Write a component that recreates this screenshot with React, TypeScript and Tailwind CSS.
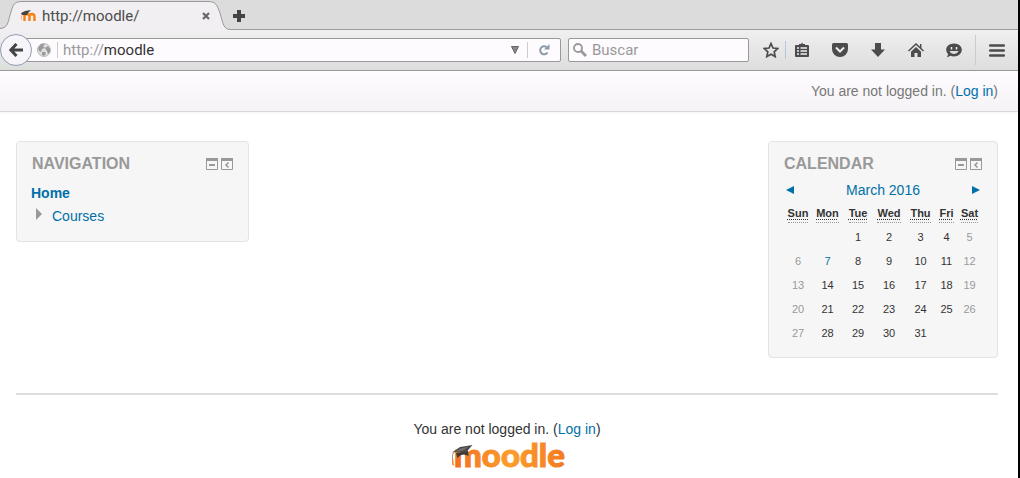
import type { ReactNode } from 'react';

const iconButton = 'flex h-7 w-[38px] items-center justify-center text-[#4c4c4c]';

function MoodleCap({ className }: { className: string }) {
  return (
    <svg viewBox="0 0 24 24" className={className} aria-hidden="true">
      <path d="M5 8 17 6 17.500 11C14 8.500 10 9 6.500 13Z" fill="#3a3a3a" />
      <path d="M1 7.500 9 2 21.500 0 15 7.500 8 6.800Z" fill="#4a4a4a" />
      <path d="M4 6.500 10 3.500 18 1.500 12 5.500Z" fill="#707070" />
      <path d="M3.500 7C1.500 8 1.500 10 1.500 14" fill="none" stroke="#777" strokeWidth="0.800" />
      <path d="M1 14h1.200l.8 7-2-1.500Z" fill="#f58a3c" />
    </svg>
  );
}

function TabStrip() {
  return (
    <div className="flex h-[30px] items-end border-b border-[#9c9c9c] bg-[#dcdcdc]">
      <div className="relative -mb-px h-[30px] w-[231px] shrink-0">
        <svg viewBox="0 0 231 30" className="absolute inset-0 h-full w-full" aria-hidden="true">
          <path
            d="M0 29C9 29 8 20 11 12C13 4 15 1.500 22 1.500H208C216 1.500 217 5 220 13C223 23 223 29.500 231 29.500V30H0Z"
            fill="#f1eff1"
          />
          <path
            d="M0 28.500C9 28 8 20 11 12C13 4 15 1.500 22 1.500H208C216 1.500 217 5 220 13C223 23 223 29.500 231 29.500"
            fill="none"
            stroke="#999"
          />
        </svg>
        <div className="relative flex h-full items-center pl-5 pr-[17px] pt-0.5 text-[15px] text-[#4c4c4c]">
          <span className="flex h-4 w-[22px] items-center" aria-hidden="true">
            <svg viewBox="0 0 18 16" className="h-4 w-[18px]">
              <path d="M4.500 13V7M4.500 9C4.500 5 9.500 5 9.500 9V13M9.500 9C9.500 5 14.500 5 14.500 9V13" fill="none" stroke="#f98012" strokeWidth="2.400" />
              <path d="M1 5 5 3 11 2 8 5 7 7 2 7Z" fill="#444" />
              <path d="M1.500 6V12" stroke="#f5a590" strokeWidth="0.800" />
            </svg>
          </span>
          <span className="grow">http://moodle/</span>
          <button type="button" aria-label="Close tab" className="flex h-4 w-4 items-center justify-center">
            <svg viewBox="0 0 8 8" className="h-2 w-2">
              <path d="m1 1 6 6M7 1 1 7" stroke="#666" strokeWidth="2.200" />
            </svg>
          </button>
        </div>
      </div>
      <button type="button" aria-label="New tab" className="flex h-[27px] w-4 items-center justify-center">
        <svg viewBox="0 0 12 12" className="h-3 w-3">
          <path d="M6 0v12M0 6h12" stroke="#444" strokeWidth="4" />
        </svg>
      </button>
    </div>
  );
}

function Toolbar() {
  return (
    <div className="flex h-[41px] items-center border-b border-[#999] bg-linear-to-b from-[#f1eff1] via-[#e7e6e7] to-[#dcdedc]">
      <button
        type="button"
        aria-label="Back"
        className="z-10 flex h-8 w-8 shrink-0 items-center justify-center rounded-full border border-[#939bb0] bg-[#f7f5f9]"
      >
        <svg viewBox="0 0 14 14" className="h-3.5 w-3.5">
          <path d="M7.500 1 1.800 7l5.700 6M2 7h12" fill="none" stroke="#444" strokeWidth="3" />
        </svg>
      </button>
      <div className="-ml-2 flex h-6 grow items-center rounded-r-xs border border-[#999] bg-[#fdfbfe] pl-3">
        <svg viewBox="0 0 14 14" className="h-3.5 w-3.5 shrink-0" aria-hidden="true">
          <circle cx="7" cy="7" r="6.500" fill="#dedede" stroke="#bbb" />
          <path d="M1 5 4 1 8 1 6 3 8 5 5 6 4 9 2 8ZM8 5 11 3 13 6 13 9 11 11 10 8ZM5 9 8 9 9 11 7 13 5 12Z" fill="#999" />
        </svg>
        <span className="ml-1.5 h-4 w-px bg-[#ccc]" />
        <div className="relative ml-[5px] h-5 grow text-[15px] leading-5">
          <input
            type="text"
            aria-label="Address"
            defaultValue="http://moodle"
            className="block h-5 w-full bg-transparent text-[#333] outline-none"
          />
          <span className="pointer-events-none absolute left-0 top-0 bg-[#fdfbfe] text-[#999]" aria-hidden="true">
            http://
          </span>
        </div>
        <button type="button" aria-label="Show history" className="flex h-5 w-6 items-center justify-center">
          <svg viewBox="0 0 8 8" className="h-2 w-2">
            <path d="M.5.500h7L4 7.500Z" fill="#888" stroke="#666" />
          </svg>
        </button>
        <span className="h-4 w-px bg-[#ccc]" />
        <button type="button" aria-label="Reload" className="flex h-5 w-8 items-center justify-center">
          <svg viewBox="0 0 12 12" className="h-3 w-3">
            <path d="M9.500 8.500A4 4 0 1 1 8.500 3" fill="none" stroke="#8a9aa8" strokeWidth="2" />
            <path d="M11.500 0v5.500H6Z" fill="#8a9aa8" />
          </svg>
        </button>
      </div>
      <label className="ml-[7px] flex h-6 w-[181px] shrink-0 items-center rounded-xs border border-[#999] bg-[#fdfbfe] pl-1 text-[15px]">
        <svg viewBox="0 0 14 14" className="h-3.5 w-3.5 shrink-0" aria-hidden="true">
          <circle cx="5" cy="5" r="4" fill="none" stroke="#999" strokeWidth="1.800" />
          <path d="m8 8 5 5" stroke="#999" strokeWidth="2.800" />
        </svg>
        <input
          type="search"
          aria-label="Buscar"
          placeholder="Buscar"
          className="ml-[5px] h-5 w-full bg-transparent outline-none placeholder:text-[#999]"
        />
      </label>
      <div className="ml-2 flex shrink-0 items-center">
        <button type="button" aria-label="Bookmark this page" className="flex h-7 w-7 items-center justify-center">
          <svg viewBox="0 0 16 16" className="h-4 w-4">
            <path d="m8 1.500 2 4.500 4.800.500-3.600 3.300 1 4.800L8 12.200l-4.200 2.400 1-4.800L1.200 6.500 6 6Z" fill="none" stroke="#4c4c4c" strokeWidth="1.700" />
          </svg>
        </button>
        <span className="h-[18px] w-px bg-[#b8c6dc]" />
        <button type="button" aria-label="Show bookmarks" className="flex h-7 w-8 items-center justify-center">
          <svg viewBox="0 0 16 16" className="h-4 w-4">
            <path d="M2 3h12q1 0 1 1v10q0 1-1 1H2q-1 0-1-1V4Q1 3 2 3Z" fill="#4c4c4c" />
            <path d="M5 4V2h2l1-1.500L9 2h2v2Z" fill="#4c4c4c" />
            <path d="M3 6h2M6.500 6h6.500M3 9h2M6.500 9h6.500M3 12h2M6.500 12h6.500" stroke="#eee" strokeWidth="1.600" />
          </svg>
        </button>
        <button type="button" aria-label="Pocket" className={`${iconButton} ml-[3px]`}>
          <svg viewBox="0 0 16 14" className="h-3.5 w-4">
            <path d="M1.500 0h13Q16 0 16 1.500V6a8 8 0 0 1-16 0V1.500Q0 0 1.500 0Z" fill="currentColor" />
            <path d="m4 4.500 4 4 4-4" fill="none" stroke="#eee" strokeWidth="2" />
          </svg>
        </button>
        <button type="button" aria-label="Downloads" className={iconButton}>
          <svg viewBox="0 0 14 14" className="h-3.5 w-3.5">
            <path d="M4 0h6v6.500h4L7 14 0 6.500h4Z" fill="currentColor" />
          </svg>
        </button>
        <button type="button" aria-label="Home page" className={iconButton}>
          <svg viewBox="0 0 16 15" className="h-[15px] w-4">
            <path d="M.5 8 8 1l7.500 7M12.700 1v4" fill="none" stroke="currentColor" strokeWidth="1.500" />
            <path d="M8 4 13 8.800V14H9.500v-4h-3v4H3V8.800Z" fill="currentColor" />
          </svg>
        </button>
        <button type="button" aria-label="Chat" className={iconButton}>
          <svg viewBox="0 0 16 15" className="h-[15px] w-4">
            <path d="M8 .500c4.400 0 7.800 2.800 7.800 6.300S12.400 13.500 8 13.500c-1.300 0-2.500-.2-3.500-.7L.8 14.500l1.400-3.200C1 10.100.2 8.600.2 6.800.2 3.300 3.600.500 8 .500Z" fill="currentColor" />
            <path d="M5.500 4v2.500M10.500 4v2.500" stroke="#eee" strokeWidth="1.500" />
            <path d="M3.500 8h9c-1.500 4-7.500 4-9 0Z" fill="#ddd" />
          </svg>
        </button>
        <span className="ml-[2px] h-[30px] w-px bg-[#ccc]" />
        <button type="button" aria-label="Open menu" className="flex h-7 w-[42px] items-center justify-center">
          <svg viewBox="0 0 16 13" className="h-[13px] w-4">
            <path d="M1.200 1.500h13.600M1.200 6.500h13.600M1.200 11.500h13.600" stroke="#4c4c4c" strokeWidth="2.600" strokeLinecap="round" />
          </svg>
        </button>
      </div>
    </div>
  );
}

function LoginInfo() {
  return (
    <>
      You are not logged in. (
      <a href="#login" className="text-[#0070a8]">
        Log in
      </a>
      )
    </>
  );
}

function Block({ title, className, children }: { title: string; className: string; children: ReactNode }) {
  return (
    <section className={`rounded border border-[#e3e3e3] bg-[#f6f6f6] px-[15px] pt-3 ${className}`}>
      <header className="flex h-5 items-center justify-between">
        <h2 className="text-base font-bold leading-5 text-[#999]">{title}</h2>
        <div className="flex gap-[3px]">
          <button type="button" aria-label={`Hide ${title} block`}>
            <svg viewBox="0 0 12 12" className="block h-3 w-3">
              <path d="M.5 1h11v10.500H.5Z" fill="none" stroke="#999" />
              <path d="M0 0h12v3H0ZM3 6h6v2H3Z" fill="#999" />
            </svg>
          </button>
          <button type="button" aria-label={`Dock ${title} block`}>
            <svg viewBox="0 0 12 12" className="block h-3 w-3">
              <path d="M.5 1h11v10.500H.5Z" fill="none" stroke="#999" />
              <path d="M0 0h12v3H0Z" fill="#999" />
              <path d="M7.500 4.500 5 7l2.500 2.500" fill="none" stroke="#999" strokeWidth="1.600" />
            </svg>
          </button>
        </div>
      </header>
      {children}
    </section>
  );
}

const days = [
  { short: 'Sun', full: 'Sunday', width: 'w-[28px]' },
  { short: 'Mon', full: 'Monday', width: 'w-[31px]' },
  { short: 'Tue', full: 'Tuesday', width: 'w-[30px]' },
  { short: 'Wed', full: 'Wednesday', width: 'w-[32px]' },
  { short: 'Thu', full: 'Thursday', width: 'w-[31px]' },
  { short: 'Fri', full: 'Friday', width: 'w-[21px]' },
  { short: 'Sat', full: 'Saturday', width: 'w-[25px]' },
];

const weeks = [
  [0, 0, 1, 2, 3, 4, 5],
  [6, 7, 8, 9, 10, 11, 12],
  [13, 14, 15, 16, 17, 18, 19],
  [20, 21, 22, 23, 24, 25, 26],
  [27, 28, 29, 30, 31, 0, 0],
];

function CalendarTable() {
  return (
    <table className="w-full table-fixed text-[11px] leading-4 text-[#333]">
      <thead>
        <tr className="h-[25px]">
          {days.map(({ short, full, width }) => (
            <th key={short} scope="col" className={`${width} p-0 font-bold`}>
              <abbr title={full} className="border-b border-dotted border-[#999] pb-[3px] underline decoration-dotted underline-offset-2">
                {short}
              </abbr>
            </th>
          ))}
        </tr>
      </thead>
      <tbody>
        {weeks.map((week, row) => (
          <tr key={row} className="h-6 text-center">
            {week.map((day, col) => (
              <td key={col} className={col === 0 || col === 6 ? 'p-0 text-[#999]' : 'p-0'}>
                {day === 7 ? (
                  <a href="#today" className="text-[#0070a8]">
                    7
                  </a>
                ) : (
                  day || ''
                )}
              </td>
            ))}
          </tr>
        ))}
      </tbody>
    </table>
  );
}

export default function App() {
  return (
    <div className="min-h-screen border-r-2 border-black bg-white font-['Liberation_Sans',sans-serif] text-sm leading-5 text-[#333]">
      <div className="font-[Roboto,sans-serif]">
        <TabStrip />
        <Toolbar />
      </div>
      <div className="flex h-[41px] items-center justify-end border-b border-[#d8d6d8] bg-linear-to-b from-[#fefcfe] to-[#f5f3f5] pr-5 text-[#777] shadow-xs">
        <p>
          <LoginInfo />
        </p>
      </div>
      <div className="pl-4 pr-5">
        <main className="flex items-start justify-between pt-[29px]">
          <Block title="NAVIGATION" className="w-[233px] pb-[15px]">
            <nav className="-ml-px mt-[9px]">
              <a href="#home" className="block font-bold leading-5 text-[#0070a8]">
                Home
              </a>
              <a href="#courses" className="mt-[3px] flex items-center text-[#0070a8]">
                <svg viewBox="0 0 6 12" className="mb-1 ml-[5px] mr-2.5 h-3 w-1.5" aria-hidden="true">
                  <path d="M0 0 6 6 0 12Z" fill="#999" />
                </svg>
                Courses
              </a>
            </nav>
          </Block>
          <Block title="CALENDAR" className="w-[230px] pb-3">
            <div className="mt-1.5 flex items-center justify-between text-[#0070a8]">
              <a href="#previous" aria-label="Previous month" className="ml-0.5">
                <svg viewBox="0 0 8 8" className="h-2 w-2">
                  <path d="M8 0v8L0 4Z" fill="currentColor" />
                </svg>
              </a>
              <a href="#month">March 2016</a>
              <a href="#next" aria-label="Next month" className="mr-0.5">
                <svg viewBox="0 0 8 8" className="h-2 w-2">
                  <path d="M0 0v8l8-4Z" fill="currentColor" />
                </svg>
              </a>
            </div>
            <CalendarTable />
          </Block>
        </main>
        <footer className="mt-[35px] border-t-2 border-[#ddd] pt-6 text-center">
          <p>
            <LoginInfo />
          </p>
          <a href="#moodle" className="relative mx-auto block h-[30px] w-28">
            <svg viewBox="0 0 112 30" className="block h-[30px] w-28 overflow-visible" role="img" aria-label="moodle">
              <defs>
                <linearGradient id="brand" x1="0" x2="1">
                  <stop offset="0" stopColor="#f26f21" />
                  <stop offset="0.500" stopColor="#fb9e2c" />
                  <stop offset="1" stopColor="#f47b20" />
                </linearGradient>
              </defs>
              <text x="3" y="28" fill="url(#brand)" stroke="url(#brand)" strokeWidth="1" className="font-['Lato',sans-serif] text-[33px] font-black">
                moodle
              </text>
            </svg>
            <MoodleCap className="absolute left-0 top-1.5 h-6 w-6" />
          </a>
        </footer>
      </div>
    </div>
  );
}
